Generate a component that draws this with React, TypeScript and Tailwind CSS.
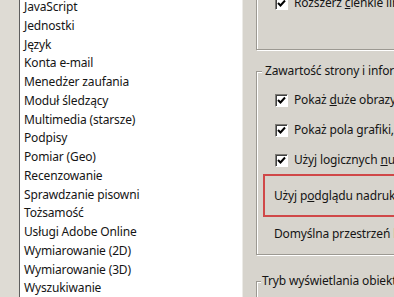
import React from 'react';

const items = [
  'JavaScript',
  'Jednostki',
  'Język',
  'Konta e-mail',
  'Menedżer zaufania',
  'Moduł śledzący',
  'Multimedia (starsze)',
  'Podpisy',
  'Pomiar (Geo)',
  'Recenzowanie',
  'Sprawdzanie pisowni',
  'Tożsamość',
  'Usługi Adobe Online',
  'Wymiarowanie (2D)',
  'Wymiarowanie (3D)',
  'Wyszukiwanie',
];

function Check() {
  return (
    <span className="flex h-[13px] w-[13px] shrink-0 items-center justify-center border border-t-[#7d7b76] border-l-[#7d7b76] border-b-white border-r-white bg-white shadow-[inset_1px_1px_0_#404040]">
      <svg width="9" height="9" viewBox="0 0 9 9">
        <path d="M1 4 L3.5 6.5 L8 1.5" fill="none" stroke="#000" strokeWidth="2" />
      </svg>
    </span>
  );
}

function CheckRow({ children }: { children: React.ReactNode }) {
  return (
    <div className="flex h-[30px] items-center gap-[6px] whitespace-nowrap pl-[18px]">
      <Check />
      <span>{children}</span>
    </div>
  );
}

export default function App() {
  return (
    <div
      className="flex h-[297px] w-[394px] overflow-hidden bg-[#d7d4cd] text-[12px] tracking-[-0.15px] text-[#151515]"
      style={{ fontFamily: '"Noto Sans", "Open Sans", sans-serif' }}
    >
      {/* Left: tree gutter */}
      <div className="w-[20px] shrink-0 border-r border-[#5e5e5e] bg-[#dedbd4]" />

      {/* Category list */}
      <div className="w-[222px] shrink-0 bg-white pl-[4px]">
        <div className="-mt-[2px]">
          {items.map((it) => (
            <div key={it} className="h-[18.75px] leading-[18.75px] whitespace-nowrap">
              {it}
            </div>
          ))}
        </div>
      </div>

      {/* Settings pane */}
      <div className="flex w-[200px] shrink-0 flex-col border-l border-[#ecebe7] pl-[13px]">
        {/* group 1, cut off at top */}
        <div className="-mt-[30px] h-[80px] w-[220px] shrink-0 border border-[#9c9992] shadow-[inset_1px_1px_0_#fff,1px_1px_0_#fff]">
          <div className="mt-[17px]">
            <CheckRow>
              Rozszerz <u>c</u>ienkie linie
            </CheckRow>
          </div>
        </div>

        {/* group 2 */}
        <div className="relative mt-[21px] h-[184px] w-[220px] shrink-0 border border-[#9c9992] shadow-[inset_1px_1px_0_#fff,1px_1px_0_#fff]">
          <span className="absolute -top-[10px] left-[5px] whitespace-nowrap bg-[#d7d4cd] px-[3px]">
            Zawartość strony i informacje
          </span>
          <div className="pt-[13px]">
            <CheckRow>
              Pokaż <u>d</u>uże obrazy
            </CheckRow>
            <CheckRow>
              Pokaż pola <u>g</u>rafiki, spadu i przycięcia
            </CheckRow>
            <CheckRow>
              Użyj logicznych <u>n</u>umerów stron
            </CheckRow>
          </div>
          <div className="ml-[6px] mt-[-1px] flex h-[43px] items-center whitespace-nowrap border-2 border-[#d04848] pl-[9px]">
            Użyj p<u>o</u>dglądu nadruku
          </div>
          <div className="flex h-[34px] items-center whitespace-nowrap pl-[17px]">
            Domyślna przestrzeń kolorów mieszania przezroczystości
          </div>
        </div>

        {/* group 3 */}
        <div className="relative mt-[26px] h-[40px] w-[220px] shrink-0 border border-[#9c9992] shadow-[inset_1px_1px_0_#fff,1px_1px_0_#fff]">
          <span className="absolute -top-[10px] left-[4px] whitespace-nowrap bg-[#d7d4cd] px-[1px]">
            Tryb wyświetlania obiektów
          </span>
        </div>
      </div>
    </div>
  );
}
